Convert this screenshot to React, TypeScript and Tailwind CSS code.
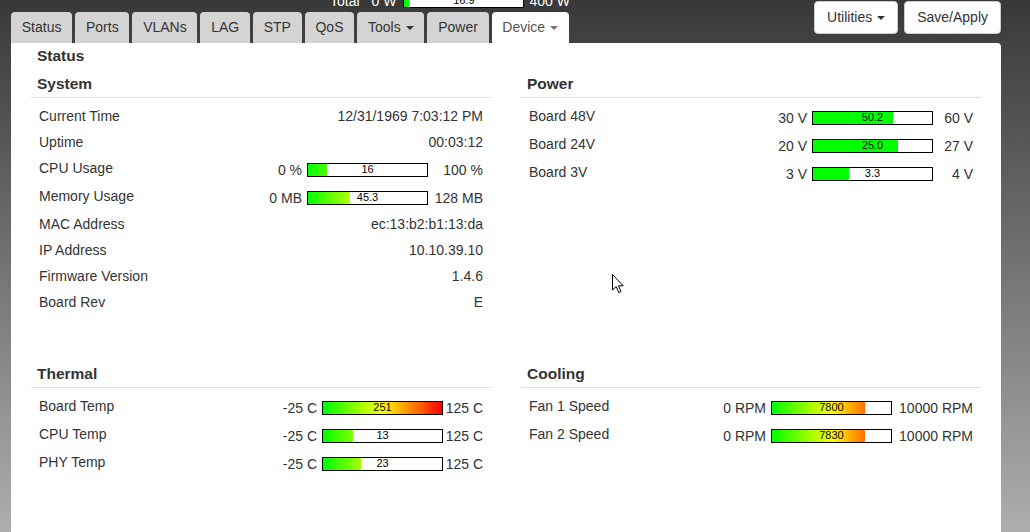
import React from "react";

type BarProps = { value: string; pct: number; solid?: boolean };

const Bar = ({ value, pct, solid }: BarProps) => {
  const fill = solid
    ? "h-full w-[119px] bg-[#00ff00]"
    : "h-full w-[119px] bg-[linear-gradient(to_right,#00ff00,#ffff00,#ff0000)]";
  return (
    <div className="relative h-[14px] w-[121px] shrink-0 border border-black bg-white">
      <div className="h-full overflow-hidden" style={{ width: `${Math.min(pct, 100)}%` }}>
        <div className={fill}></div>
      </div>
      <span className="absolute inset-x-0 top-[-1px] text-center text-[11px] leading-[12px] text-black">
        {value}
      </span>
    </div>
  );
};

const InfoRow = ({ label, value }: { label: string; value: string }) => (
  <div className="flex h-[26px] items-start justify-between px-[8px] pt-[3px] leading-5">
    <span>{label}</span>
    <span>{value}</span>
  </div>
);

type BarRowProps = {
  label: string;
  min: string;
  max: string;
  value: string;
  pct: number;
  solid?: boolean;
  maxW: string;
};

const BarRow = ({ label, min, max, value, pct, solid, maxW }: BarRowProps) => (
  <div className="flex h-[28px] items-start px-[8px]">
    <span className="pt-[3px] leading-5">{label}</span>
    <div className="mt-[5px] flex h-5 flex-1 items-center justify-end leading-5">
      <span className="mr-[5px]">{min}</span>
      <Bar value={value} pct={pct} solid={solid} />
      <span className={`${maxW} text-right`}>{max}</span>
    </div>
  </div>
);

const Section = ({ title, children }: { title: string; children: React.ReactNode }) => (
  <div>
    <h3 className="border-b border-[#e0e0e0] pb-[3px] pl-[6px] text-[15.5px] font-bold leading-5">
      {title}
    </h3>
    <div className="mt-[5px]">{children}</div>
  </div>
);

const Caret = () => (
  <span className="ml-[5px] inline-block h-0 w-0 border-x-[4px] border-t-[4px] border-x-transparent border-t-current align-middle"></span>
);

const tabs = ["Status", "Ports", "VLANs", "LAG", "STP", "QoS", "Tools", "Power", "Device"];

export default function App() {
  return (
    <div className="relative flex min-h-[532px] flex-col bg-[linear-gradient(to_bottom,#383838,#aeaeae)] pl-[11px] pr-[29px] font-['Liberation_Sans',Arial,sans-serif] text-[14px] text-[#333]">
      <div className="flex h-[43px] items-start justify-between">
        <div className="flex flex-col">
          <div className="h-[12px] pl-[319px]">
            <div className="-mt-[9px] flex h-5 items-center leading-5 text-white">
              <span>Total</span>
              <span className="ml-[12px]">0 W</span>
              <div className="ml-[7px]">
                <Bar value="16.9" pct={4.2} solid />
              </div>
              <span className="ml-[5px]">400 W</span>
            </div>
          </div>
          <div className="flex h-[31px] gap-[3px]">
            {tabs.map((t) => {
              const active = t === "Device";
              const caret = t === "Tools" || t === "Device";
              return (
                <div
                  key={t}
                  className={
                    active
                      ? "flex items-center rounded-t-[4px] bg-white px-[10.75px] text-[#555]"
                      : "flex items-center rounded-t-[4px] bg-[#d4d4d4] px-[10.75px]"
                  }
                >
                  {t}
                  {caret && (
                    <span className={active ? "text-[#777]" : ""}>
                      <Caret />
                    </span>
                  )}
                </div>
              );
            })}
          </div>
        </div>
        <div className="mt-[1px] flex gap-[6px]">
          <button className="flex h-[33px] items-center rounded-[4px] border border-[#ccc] bg-white px-[12px]">
            Utilities
            <Caret />
          </button>
          <button className="flex h-[33px] items-center rounded-[4px] border border-[#ccc] bg-white px-[12px]">
            Save/Apply
          </button>
        </div>
      </div>

      <div className="flex-1 rounded-tr-[4px] bg-white px-[20px] pt-[3px]">
        <div className="pl-[6px] text-[15.5px] font-bold leading-5">Status</div>
        <div className="mt-[8px] grid grid-cols-2 gap-x-[30px] gap-y-[49px]">
          <Section title="System">
            <InfoRow label="Current Time" value="12/31/1969 7:03:12 PM" />
            <InfoRow label="Uptime" value="00:03:12" />
            <BarRow label="CPU Usage" min="0 %" max="100 %" value="16" pct={16} maxW="w-[55px]" />
            <BarRow label="Memory Usage" min="0 MB" max="128 MB" value="45.3" pct={35.4} maxW="w-[55px]" />
            <InfoRow label="MAC Address" value="ec:13:b2:b1:13:da" />
            <InfoRow label="IP Address" value="10.10.39.10" />
            <InfoRow label="Firmware Version" value="1.4.6" />
            <InfoRow label="Board Rev" value="E" />
          </Section>
          <Section title="Power">
            <BarRow label="Board 48V" min="30 V" max="60 V" value="50.2" pct={67.3} solid maxW="w-[40px]" />
            <BarRow label="Board 24V" min="20 V" max="27 V" value="25.0" pct={71.4} solid maxW="w-[40px]" />
            <BarRow label="Board 3V" min="3 V" max="4 V" value="3.3" pct={30} solid maxW="w-[40px]" />
          </Section>
          <Section title="Thermal">
            <BarRow label="Board Temp" min="-25 C" max="125 C" value="251" pct={100} maxW="w-[40px]" />
            <BarRow label="CPU Temp" min="-25 C" max="125 C" value="13" pct={25.3} maxW="w-[40px]" />
            <BarRow label="PHY Temp" min="-25 C" max="125 C" value="23" pct={32} maxW="w-[40px]" />
          </Section>
          <Section title="Cooling">
            <BarRow label="Fan 1 Speed" min="0 RPM" max="10000 RPM" value="7800" pct={78} maxW="w-[81px]" />
            <BarRow label="Fan 2 Speed" min="0 RPM" max="10000 RPM" value="7830" pct={78.3} maxW="w-[81px]" />
          </Section>
        </div>
      </div>

      <svg
        className="absolute left-[612px] top-[274px]"
        width="12"
        height="20"
        viewBox="0 0 12 20"
      >
        <path
          d="M0.5 0.5 L0.5 16 L4.2 12.6 L6.8 18.6 L9 17.6 L6.5 11.8 L11.2 11.8 Z"
          fill="#fff"
          stroke="#000"
          strokeWidth="1"
          strokeLinejoin="miter"
        />
      </svg>
    </div>
  );
}
